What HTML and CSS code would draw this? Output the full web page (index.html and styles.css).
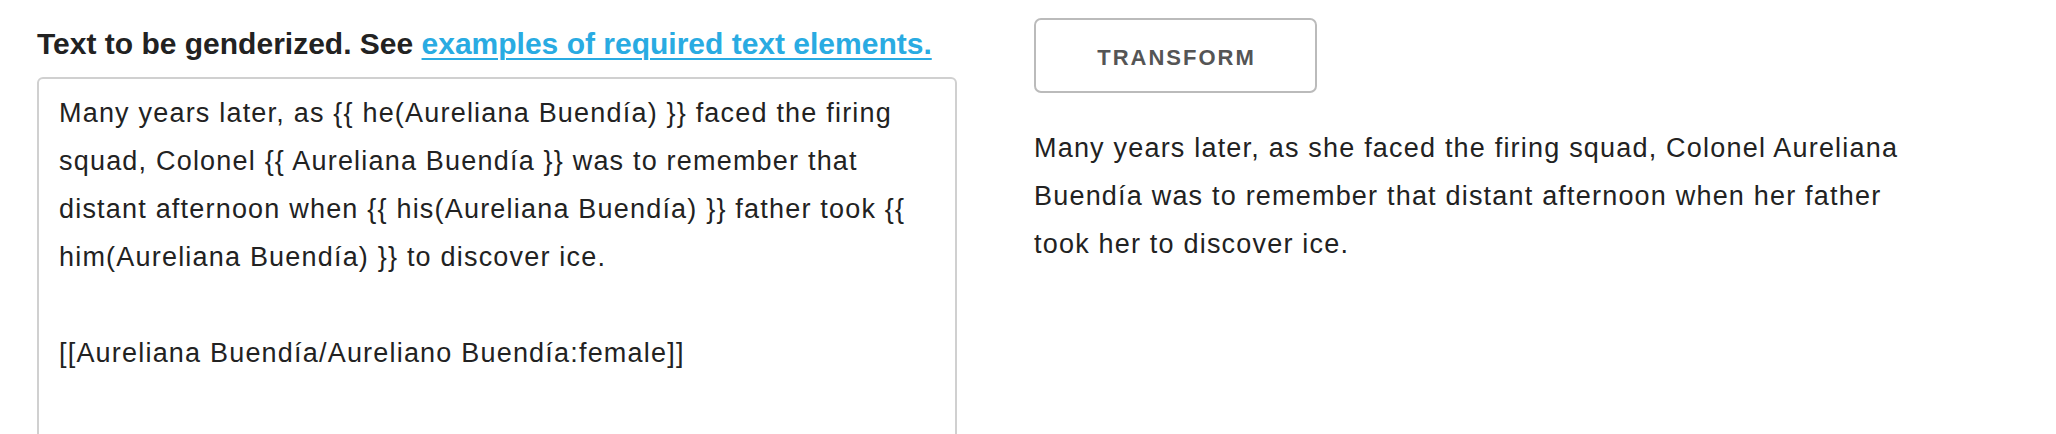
FILE: index.html
```html
<!DOCTYPE html>
<html lang="en">
<head>
<meta charset="utf-8">
<title>Genderize</title>
<link rel="stylesheet" href="styles.css">
</head>
<body>
<main class="page">
  <section class="col col-input">
    <label class="label" for="src">Text to be genderized. See <a class="link" href="#">examples of required text elements.</a></label>
    <textarea id="src" class="source">Many years later, as {{ he(Aureliana Buendía) }} faced the firing squad, Colonel {{ Aureliana Buendía }} was to remember that distant afternoon when {{ his(Aureliana Buendía) }} father took {{ him(Aureliana Buendía) }} to discover ice.

[[Aureliana Buendía/Aureliano Buendía:female]]</textarea>
  </section>
  <section class="col col-output">
    <button class="btn" type="button">TRANSFORM</button>
    <p class="result">Many years later, as she faced the firing squad, Colonel Aureliana Buendía was to remember that distant afternoon when her father took her to discover ice.</p>
  </section>
</main>
</body>
</html>
```
FILE: styles.css
```css
html, body {
  margin: 0;
  padding: 0;
  background: #fff;
}
body {
  font-family: "Liberation Sans", Arial, Helvetica, sans-serif;
  color: #222;
  overflow: hidden;
}
.page {
  display: flex;
  gap: 77px;
  padding: 0 0 0 37px;
}
.col {
  flex: none;
  display: flex;
  flex-direction: column;
}
.col-input {
  width: 920px;
  padding-top: 26px;
}
.label {
  font-size: 30px;
  font-weight: bold;
  line-height: 36px;
  margin-bottom: 15px;
  color: #222;
}
.link {
  color: #29abe2;
  text-decoration: underline;
  text-decoration-thickness: 2px;
  text-underline-offset: 4px;
}
.source {
  box-sizing: border-box;
  width: 920px;
  height: 420px;
  margin: 0;
  border: 2px solid #d0d0d0;
  border-radius: 6px;
  padding: 10px 20px;
  font-family: "Liberation Sans", Arial, Helvetica, sans-serif;
  font-size: 27px;
  line-height: 48px;
  letter-spacing: 1.2px;
  color: #222;
  resize: none;
  overflow: hidden;
  outline: none;
}
.col-output {
  width: 900px;
  padding-top: 18px;
  align-items: flex-start;
}
.btn {
  box-sizing: border-box;
  width: 283px;
  height: 75px;
  border: 2px solid #bbb;
  border-radius: 7px;
  background: #fff;
  color: #555;
  font-family: "Liberation Sans", Arial, Helvetica, sans-serif;
  font-size: 22px;
  font-weight: bold;
  letter-spacing: 2px;
  padding: 4px 0 0 2px;
  cursor: pointer;
}
.result {
  margin: 31px 0 0;
  font-size: 27px;
  line-height: 48px;
  letter-spacing: 1.2px;
  color: #222;
}
```
